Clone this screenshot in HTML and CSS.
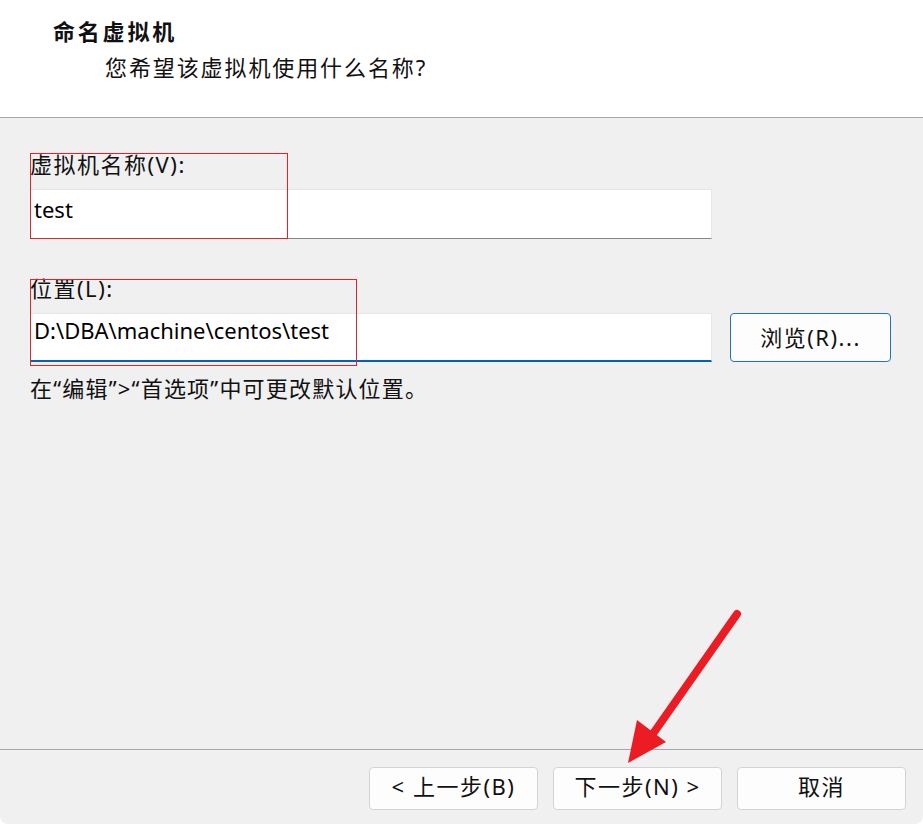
FILE: index.html
```html
<html lang="zh-CN">
<head>
    <meta charset="UTF-8">
    <title>新建虚拟机向导</title>
    <link rel="stylesheet" href="styles.css">
</head>
<body>
    <div class="dialog">
        <div class="header">
            <h1 class="title">命名虚拟机</h1>
            <p class="subtitle">您希望该虚拟机使用什么名称?</p>
        </div>

        <div class="content">
            <div class="field field-name">
                <label class="label">虚拟机名称(V):</label>
                <div class="input-row">
                    <div class="input">test</div>
                </div>
                <div class="mark mark-name"></div>
            </div>

            <div class="field field-path">
                <label class="label">位置(L):</label>
                <div class="input-row">
                    <div class="input focused">D:\DBA\machine\centos\test</div>
                    <button class="btn browse">浏览(R)...</button>
                </div>
                <div class="mark mark-path"></div>
            </div>

            <p class="hint">在“编辑”&gt;“首选项”中可更改默认位置。</p>
        </div>

        <div class="footer">
            <button class="btn">&lt; 上一步(B)</button>
            <button class="btn">下一步(N) &gt;</button>
            <button class="btn">取消</button>
        </div>

        <svg class="arrow" width="923" height="824" viewBox="0 0 923 824">
            <line x1="737" y1="614" x2="650" y2="738" stroke="#ec1c24" stroke-width="8" stroke-linecap="round"/>
            <polygon points="628,763 637,720 666,742" fill="#ec1c24"/>
        </svg>
    </div>
</body>
</html>
```

FILE: styles.css
```css
body {
    margin: 0;
    background: #ffffff;
    font-family: "Noto Sans", "Noto Sans CJK SC", sans-serif;
    color: #111;
}

.dialog {
    position: relative;
    width: 923px;
    height: 824px;
    display: flex;
    flex-direction: column;
    background: #f0f0f0;
    border-radius: 0 0 8px 8px;
    overflow: hidden;
}

.header {
    height: 117px;
    background: #fff;
    border-bottom: 1px solid #a8a8a8;
    box-sizing: content-box;
}

.title {
    margin: 0;
    padding: 16px 0 0 53px;
    font-size: 22px;
    line-height: 30px;
    font-weight: bold;
    letter-spacing: 2.8px;
}

.subtitle {
    margin: 6px 0 0 105px;
    font-size: 22px;
    line-height: 30px;
    letter-spacing: 1.9px;
}

.content {
    flex: 1;
    padding: 31px 30px 0;
}

.field {
    position: relative;
}

.label {
    display: block;
    font-size: 22px;
    line-height: 30px;
    letter-spacing: 1.5px;
}

.input-row {
    display: flex;
    align-items: flex-start;
    gap: 18px;
    margin-top: 10px;
}

.input {
    width: 677px;
    height: 48px;
    padding-left: 4px;
    background: #fff;
    border: 1px solid #e6e6e6;
    border-bottom: 1px solid #858585;
    border-left: none;
    font-size: 22px;
    line-height: 38px;
    color: #000;
}

.input.focused {
    height: 46px;
    line-height: 33px;
    border-bottom: 2px solid #0063b8;
}

.field-path {
    margin-top: 34px;
}

.mark {
    position: absolute;
    left: 0;
    border: 1px solid #e8202a;
}

.mark-name {
    top: 4px;
    width: 256px;
    height: 84px;
}

.mark-path {
    top: 6px;
    width: 325px;
    height: 85px;
}

.hint {
    margin: 11px 0 0;
    font-size: 22px;
    line-height: 30px;
    letter-spacing: 1.2px;
}

.btn {
    font-family: inherit;
    font-size: 22px;
    color: #111;
    background: #fdfdfd;
    border: 1px solid #d3d3d3;
    border-radius: 4px;
    width: 169px;
    height: 43px;
    padding: 0 0 7px;
    letter-spacing: 1.5px;
}

.browse {
    width: 161px;
    height: 49px;
    padding-bottom: 4px;
    border-color: #1f72c4;
}

.footer {
    height: 75px;
    border-top: 1px solid #a8a8a8;
    display: flex;
    justify-content: flex-end;
    align-items: flex-start;
    gap: 15px;
    padding: 17px 17px 0 0;
    box-sizing: border-box;
}

.arrow {
    position: absolute;
    top: 0;
    left: 0;
    pointer-events: none;
}
```
